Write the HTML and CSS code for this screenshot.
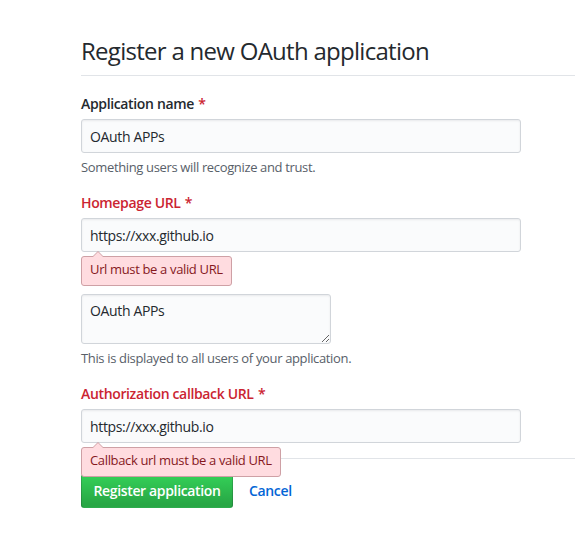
FILE: index.html
```html
<!DOCTYPE html>
<html lang="en">
<head>
<meta charset="utf-8">
<title>Register a new OAuth application</title>
<link rel="stylesheet" href="styles.css">
</head>
<body>
<div class="page">
  <div class="subhead">
    <h2 class="subhead-heading">Register a new OAuth application</h2>
  </div>
  <form class="form">
    <div class="form-group">
      <label class="label">Application name <span class="req">*</span></label>
      <div class="field">
        <input class="form-control wide" type="text" value="OAuth APPs">
      </div>
      <p class="note">Something users will recognize and trust.</p>
    </div>
    <div class="form-group errored">
      <label class="label">Homepage URL <span class="req">*</span></label>
      <div class="field">
        <input class="form-control wide" type="text" value="https://xxx.github.io">
        <div class="error">Url must be a valid URL</div>
      </div>
    </div>
    <div class="form-group desc">
      <textarea class="form-control short">OAuth APPs</textarea>
      <p class="note">This is displayed to all users of your application.</p>
    </div>
    <div class="form-group errored">
      <label class="label">Authorization callback URL <span class="req">*</span></label>
      <div class="field">
        <input class="form-control wide" type="text" value="https://xxx.github.io">
        <div class="error">Callback url must be a valid URL</div>
      </div>
    </div>
    <div class="form-actions">
      <button class="btn-primary" type="button">Register application</button>
      <a class="btn-link" href="#">Cancel</a>
    </div>
  </form>
</div>
</body>
</html>
```

FILE: styles.css
```css
html, body {
  margin: 0;
  padding: 0;
  background: #fff;
}
body {
  font-family: "Open Sans", "Noto Sans", sans-serif;
  font-size: 14px;
  line-height: 20px;
  letter-spacing: -0.025em;
  color: #24292e;
}
.page {
  padding: 33px 0 0 81px;
}
.subhead {
  border-bottom: 1px solid #e1e4e8;
  padding-bottom: 6px;
  margin-bottom: 16px;
}
.subhead-heading {
  margin: 0;
  font-size: 24px;
  line-height: 36px;
  font-weight: 400;
  letter-spacing: -0.03em;
  color: #24292e;
}
.form {
  margin: 0;
}
.form-group {
  margin: 0 0 15px;
}
.label {
  display: block;
  font-weight: 600;
  padding-top: 2px;
  margin-bottom: 5px;
}
.req {
  color: #cb2431;
  margin-left: 1px;
}
.errored .label {
  color: #cb2431;
}
.field {
  position: relative;
  width: 440px;
}
.form-control {
  display: block;
  box-sizing: border-box;
  font-family: inherit;
  font-size: 14px;
  line-height: 20px;
  letter-spacing: -0.025em;
  color: #24292e;
  background: #fafbfc;
  border: 1px solid #d1d5da;
  border-radius: 3px;
  box-shadow: inset 0 1px 2px rgba(27, 31, 35, 0.075);
  padding: 6px 8px;
  margin: 0;
  outline: none;
}
.wide {
  width: 440px;
  height: 34px;
}
.short {
  width: 250px;
  height: 50px;
  resize: vertical;
}
.desc {
  padding-top: 27px;
}
.note {
  margin: 5px 0 0;
  font-size: 13px;
  line-height: 18px;
  color: #586069;
}
.error {
  position: absolute;
  top: calc(100% + 4px);
  left: 0;
  z-index: 10;
  white-space: nowrap;
  font-size: 13px;
  line-height: 19px;
  padding: 3px 8px 6px;
  color: #86181d;
  background: #ffdce0;
  border: 1px solid #cea0a5;
  border-radius: 3px;
}
.error::before,
.error::after {
  content: "";
  position: absolute;
  left: 10px;
  width: 0;
  height: 0;
  border: 6px solid transparent;
}
.error::before {
  top: -12px;
  border-bottom-color: #cea0a5;
}
.error::after {
  top: -11px;
  border-bottom-color: #ffdce0;
}
.form-actions {
  display: flex;
  align-items: center;
  gap: 16px;
  border-top: 1px solid #e1e4e8;
  padding-top: 15px;
  margin-top: 15px;
}
.btn-primary {
  box-sizing: border-box;
  width: 152px;
  height: 34px;
  font-family: inherit;
  font-size: 14px;
  font-weight: 600;
  line-height: 20px;
  letter-spacing: -0.025em;
  color: #fff;
  background-image: linear-gradient(-180deg, #34d058 0%, #28a745 90%);
  border: 1px solid rgba(27, 31, 35, 0.2);
  border-radius: 3px;
  padding: 6px 0;
  text-align: center;
}
.btn-link {
  font-weight: 600;
  color: #0366d6;
  text-decoration: none;
}
```
